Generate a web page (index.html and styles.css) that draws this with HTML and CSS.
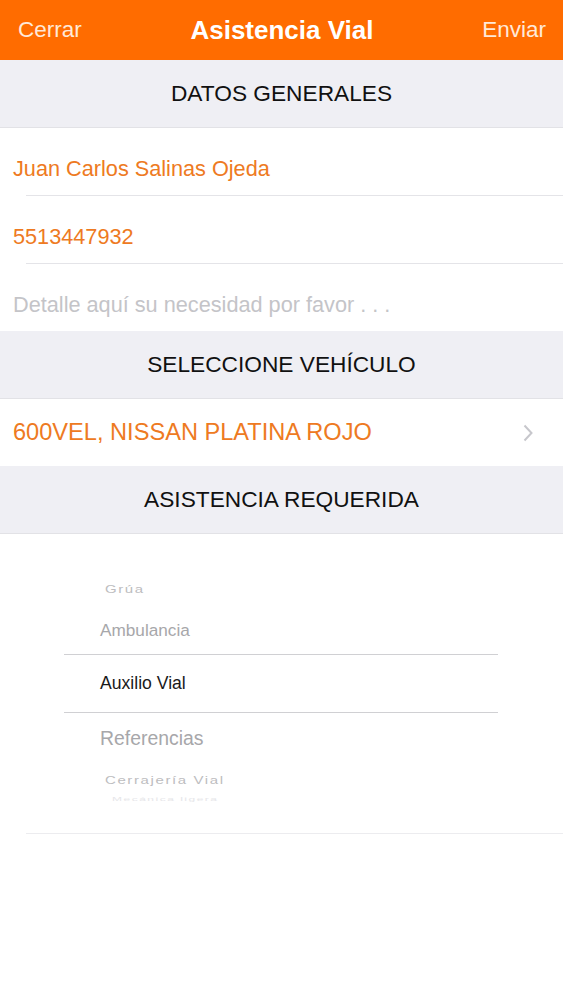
FILE: index.html
```html
<!DOCTYPE html>
<html lang="es">

<head>
  <meta charset="UTF-8">
  <title>Asistencia Vial</title>
  <link rel="stylesheet" href="styles.css">
</head>

<body>
  <div id="navbar">
    <span class="navbtn">Cerrar</span>
    <span id="title">Asistencia Vial</span>
    <span class="navbtn right">Enviar</span>
  </div>

  <div class="header">DATOS GENERALES</div>
  <div class="row sep">Juan Carlos Salinas Ojeda</div>
  <div class="row sep">5513447932</div>
  <div class="row placeholder">Detalle aquí su necesidad por favor . . .</div>

  <div class="header">SELECCIONE VEHÍCULO</div>
  <div class="row vehicle">
    <span>600VEL, NISSAN PLATINA ROJO</span>
    <svg class="chevron" width="10" height="20" viewBox="0 0 10 20">
      <path d="M1.5 2.5 L8.5 10 L1.5 17.5" fill="none" stroke="#c7c7cc" stroke-width="2" />
    </svg>
  </div>

  <div class="header">ASISTENCIA REQUERIDA</div>
  <div id="picker">
    <div class="pick far">Grúa</div>
    <div class="pick near top">Ambulancia</div>
    <div class="pick selected">Auxilio Vial</div>
    <div class="pick near bottom">Referencias</div>
    <div class="pick far">Cerrajería Vial</div>
    <div class="pick farthest">Mecánica ligera</div>
  </div>
</body>

</html>
```

FILE: styles.css
```css
body {
  margin: 0;
  font-family: "Liberation Sans", Arial, sans-serif;
  background: #fff;
  --orange: #ff6c00;
  --text-orange: #ee7a22;
}

#navbar {
  height: 60px;
  background: var(--orange);
  color: #fff;
  display: grid;
  grid-template-columns: 1fr auto 1fr;
  align-items: center;
  padding: 0 17px 0 18px;
}

.navbtn {
  font-size: 22.5px;
  color: #ffe9d8;
}

.navbtn.right {
  justify-self: end;
}

#title {
  font-size: 26px;
  font-weight: bold;
}

.header {
  height: 67px;
  background: #efeff4;
  border-bottom: 1px solid #e2e2e6;
  display: flex;
  align-items: center;
  justify-content: center;
  font-size: 22.7px;
  color: #111;
}

.row {
  height: 67px;
  box-sizing: border-box;
  display: flex;
  align-items: center;
  padding-left: 13px;
  padding-top: 14px;
  font-size: 21.7px;
  color: var(--text-orange);
  position: relative;
}

.row.sep {
  height: 68px;
}

.row.sep::after {
  content: "";
  position: absolute;
  left: 26px;
  right: 0;
  bottom: 0;
  border-bottom: 1px solid #e4e4e8;
}

.placeholder {
  color: #c4c4c8;
}

.vehicle {
  font-size: 23.6px;
  justify-content: space-between;
  padding-top: 0;
  padding-right: 30px;
}

#picker {
  height: 300px;
  margin-left: 26px;
  border-bottom: 1px solid #ececef;
  display: flex;
  flex-direction: column;
  padding-top: 41px;
  box-sizing: border-box;
}

.pick {
  width: 434px;
  margin-left: 38px;
  padding-left: 36px;
  box-sizing: border-box;
  display: flex;
  align-items: center;
  flex-shrink: 0;
}

.far {
  height: 26px;
  font-size: 15px;
  letter-spacing: 1.6px;
  color: #bdbdc0;
  padding-left: 41px;
  transform: scaleY(0.75);
}

.near {
  height: 53px;
  font-size: 18px;
  color: #a7a7aa;
}

.near.top {
  padding-top: 5px;
  font-size: 17.2px;
}

.near.bottom {
  padding-bottom: 3px;
  font-size: 19.4px;
}

.selected {
  height: 59px;
  font-size: 17.6px;
  color: #1a1a1a;
  border-top: 1px solid #d0d0d3;
  border-bottom: 1px solid #d0d0d3;
}

.farthest {
  height: 14px;
  font-size: 12px;
  letter-spacing: 1.5px;
  color: #e6e6e9;
  padding-left: 48px;
  transform: scaleY(0.4);
}
```
